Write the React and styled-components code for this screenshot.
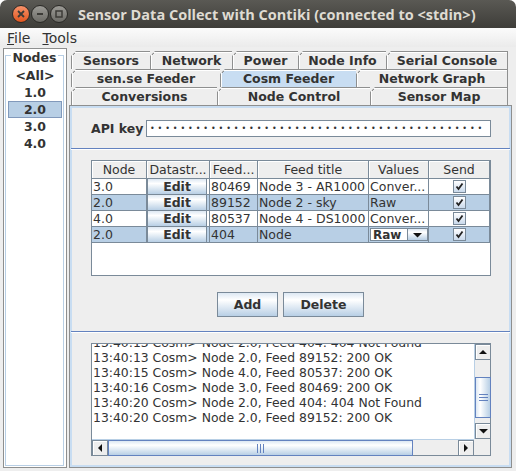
import React from 'react'
import styled, { createGlobalStyle } from 'styled-components'

const GlobalStyle = createGlobalStyle`
  html, body {
    margin: 0;
    padding: 0;
    background: #ffffff;
  }
  body {
    font-family: "DejaVu Sans", sans-serif;
    font-size: 12.5px;
    color: #333333;
  }
`

const Window = styled.div`
  width: 516px;
  height: 471px;
  display: flex;
  flex-direction: column;
  background: #eeeeee;
  border-radius: 7px 7px 0 0;
  overflow: hidden;
`

const TitleBar = styled.div`
  height: 28px;
  flex: none;
  display: flex;
  align-items: center;
  padding-left: 12px;
  background: linear-gradient(#5a5954, #3e3d39);
`

const WinButton = styled.span`
  width: 16px;
  height: 16px;
  border-radius: 50%;
  margin-right: 1px;
  display: flex;
  align-items: center;
  justify-content: center;
  border: 1px solid #2b2a27;
  background: ${(p) => (p.$close
    ? 'linear-gradient(#f7926a, #e2561f)'
    : 'linear-gradient(#9c9b96, #6c6b66)')};
`

const Title = styled.div`
  margin-left: 9px;
  color: #dfdbd2;
  font-family: "Open Sans", sans-serif;
  font-weight: 700;
  font-size: 14.5px;
  white-space: nowrap;
`

const MenuBar = styled.div`
  height: 19px;
  flex: none;
  display: flex;
  align-items: center;
  padding-left: 1px;
  background: linear-gradient(#fbfbfb, #ebebeb);
`

const MenuItem = styled.div`
  padding: 0 6px;
  font-size: 14px;
  color: #333333;
`

const Main = styled.div`
  flex: 1;
  display: flex;
  padding: 1px 4px 3px 3px;
  min-height: 0;
`

const LeftPanel = styled.div`
  width: 64px;
  box-sizing: border-box;
  border: 1px solid #8e8f8f;
  background: #ffffff;
  padding: 6px 2px 1px 1px;
  display: flex;
`

const TitledBox = styled.div`
  flex: 1;
  border: 1px solid #b8cfe5;
  display: flex;
  flex-direction: column;
  align-items: stretch;
`

const BoxTitle = styled.div`
  align-self: center;
  margin-top: -5px;
  padding: 0 2px;
  background: #ffffff;
  font-weight: bold;
  line-height: 14px;
`

const NodeList = styled.div`
  padding: 2px 1px 0 2px;
  display: flex;
  flex-direction: column;
`

const NodeItem = styled.div`
  height: 17px;
  box-sizing: border-box;
  display: flex;
  align-items: center;
  justify-content: center;
  font-weight: bold;
  background: ${(p) => (p.$sel ? '#b8cfe5' : 'transparent')};
  border: 1px solid ${(p) => (p.$sel ? '#8199bb' : 'transparent')};
`

const RightPanel = styled.div`
  flex: 1;
  margin-left: 2px;
  display: flex;
  flex-direction: column;
`

const TabArea = styled.div`
  flex: none;
  padding: 3px 4px 0 2px;
`

const TabRow = styled.div`
  display: flex;
  height: 18px;
`

const Tab = styled.div`
  box-sizing: border-box;
  width: ${(p) => p.$w}px;
  height: 18px;
  display: flex;
  align-items: center;
  justify-content: center;
  font-weight: bold;
  color: #333333;
  white-space: nowrap;
  border-top: 1px solid #8e8f8f;
  border-left: 1px solid #8e8f8f;
  border-right: ${(p) => (p.$last ? '1px solid #8e8f8f' : 'none')};
  box-shadow: inset 1px 1px 0 #ffffff;
  background:
    linear-gradient(135deg, transparent 3.3px, #8e8f8f 3.3px, #8e8f8f 4.5px, transparent 4.5px) top left / 7px 7px no-repeat border-box,
    ${(p) => (p.$sel ? '#c8ddf2' : '#eeeeee')};
  clip-path: polygon(5px 0, 100% 0, 100% 100%, 0 100%, 0 5px);
`

const Content = styled.div`
  flex: 1;
  min-height: 0;
  border: 1px solid #8e8f8f;
  box-shadow: inset 0 0 0 2px #c8ddf2;
  display: flex;
  flex-direction: column;
  padding: 2px;
  & > * {
    flex: none;
  }
`

const ApiRow = styled.div`
  display: flex;
  align-items: center;
  padding: 12px 18px 0 19px;
`

const Label = styled.div`
  font-weight: bold;
  width: 55px;
`

const TextField = styled.div`
  flex: 1;
  height: 17px;
  box-sizing: border-box;
  border: 1px solid #7a8a99;
  background: #ffffff;
  overflow: hidden;
  white-space: nowrap;
  display: flex;
  align-items: center;
  padding-left: 3px;
  font-size: 8px;
  letter-spacing: 2.9px;
  color: #333333;
`

const Separator = styled.div`
  height: 1px;
  margin: 0 -1px;
  background: #6382bf;
  border-bottom: 1px solid #ffffff;
  margin-top: ${(p) => p.$top}px;
`

const ScrollPane = styled.div`
  margin: ${(p) => p.$top}px 18px 0 19px;
  height: ${(p) => p.$h}px;
  box-sizing: border-box;
  border: 1px solid #7a8a99;
  background: #ffffff;
`

const TableGrid = styled.div`
  display: grid;
  grid-template-columns: 55px 63px 48px 111px 60px 61px;
`

const HeadCell = styled.div`
  height: 18px;
  box-sizing: border-box;
  border-right: 1px solid #7a8a99;
  border-bottom: 1px solid #7a8a99;
  background: #eeeeee;
  box-shadow: inset 1px 1px 0 #ffffff;
  display: flex;
  align-items: center;
  justify-content: center;
  white-space: nowrap;
  overflow: hidden;
`

const Cell = styled.div`
  height: 16px;
  box-sizing: border-box;
  border-right: 1px solid #7a8a99;
  border-bottom: 1px solid #7a8a99;
  background: ${(p) => (p.$sel ? '#b8cfe5' : '#ffffff')};
  display: flex;
  align-items: center;
  justify-content: ${(p) => (p.$center ? 'center' : 'flex-start')};
  padding: ${(p) => (p.$pad ? '0 0 0 1px' : '0')};
  white-space: nowrap;
  overflow: hidden;
`

const EditButton = styled.div`
  width: 60px;
  height: 15px;
  box-sizing: border-box;
  border-left: 1px solid #7a8a99;
  border-right: 1px solid #7a8a99;
  background: linear-gradient(#dde8f3 0%, #ffffff 30%, #b8cfe5 100%);
  display: flex;
  align-items: center;
  justify-content: center;
  font-weight: bold;
`

const Combo = styled.div`
  width: 58px;
  height: 13px;
  margin-left: 1px;
  box-sizing: border-box;
  border: 1px solid #7a8a99;
  display: flex;
`

const ComboText = styled.div`
  flex: 1;
  background: #ffffff;
  font-weight: bold;
  font-size: 12px;
  display: flex;
  align-items: center;
  padding-left: 2px;
`

const ComboArrow = styled.div`
  width: 19px;
  border-left: 1px solid #7a8a99;
  background: linear-gradient(#dde8f3 0%, #ffffff 30%, #b8cfe5 100%);
  display: flex;
  align-items: center;
  justify-content: center;
`

const CheckBox = styled.div`
  width: 11px;
  height: 11px;
  border: 1px solid #7a8a99;
  background: linear-gradient(#ffffff, #c9d9ec);
  display: flex;
  align-items: center;
  justify-content: center;
`

const ButtonRow = styled.div`
  display: flex;
  justify-content: center;
  gap: 5px;
  margin-top: 16px;
`

const Button = styled.button`
  width: ${(p) => p.$w}px;
  height: 25px;
  border: 1px solid #7a8a99;
  border-radius: 0;
  background: linear-gradient(#dde8f3 0%, #ffffff 30%, #b8cfe5 100%);
  font-family: "DejaVu Sans", sans-serif;
  font-weight: bold;
  font-size: 12.5px;
  color: #333333;
  padding: 0;
`

const LogGrid = styled.div`
  display: grid;
  grid-template-columns: 382px 16px;
  grid-template-rows: 95px 16px;
  height: 100%;
`

const LogView = styled.div`
  overflow: hidden;
  background: #ffffff;
`

const LogText = styled.div`
  margin-top: -9px;
  padding-left: 1px;
  line-height: 15px;
  white-space: nowrap;
  font-size: 12.4px;
`

const VBar = styled.div`
  display: flex;
  flex-direction: column;
  background: #eeeeee;
  border-left: 1px solid #b8cfe5;
`

const HBar = styled.div`
  display: flex;
  background: #eeeeee;
  border-top: 1px solid #b8cfe5;
`

const ArrowBtn = styled.div`
  width: 16px;
  height: 16px;
  flex: none;
  box-sizing: border-box;
  border: 1px solid #7a8a99;
  background: #eeeeee;
  box-shadow: inset 1px 1px 0 #ffffff;
  display: flex;
  align-items: center;
  justify-content: center;
`

const Thumb = styled.div`
  box-sizing: border-box;
  border: 1px solid #6382bf;
  display: flex;
  align-items: center;
  justify-content: center;
  flex: none;
  width: ${(p) => (p.$vertical ? '16px' : `${p.$len}px`)};
  height: ${(p) => (p.$vertical ? `${p.$len}px` : '16px')};
  background: linear-gradient(${(p) => (p.$vertical ? 'to right' : 'to bottom')}, #dde8f3 0%, #ffffff 30%, #b8cfe5 100%);
`

const Track = styled.div`
  flex: ${(p) => (p.$grow ? 1 : 'none')};
  width: ${(p) => (p.$size ? `${p.$size}px` : 'auto')};
  height: ${(p) => (p.$size ? `${p.$size}px` : 'auto')};
`

const Corner = styled.div`
  background: #eeeeee;
`

const CheckMark = () => (
  <svg width="9" height="9" viewBox="0 0 9 9">
    <path d="M1.5 4.5 L3.5 7 L7.5 1.5" stroke="#222" strokeWidth="1.8" fill="none" />
  </svg>
)

const Tri = ({ dir }) => {
  const pts = {
    up: '0,5 4,1 8,5',
    down: '0,1 4.5,5.5 9,1',
    left: '5,0 1,4 5,8',
    right: '1,0 5,4 1,8',
  }[dir]
  const vert = dir === 'up' || dir === 'down'
  return (
    <svg width={vert ? 9 : 6} height={vert ? 6 : 8} viewBox={vert ? '0 0 9 6' : '0 0 6 8'}>
      <polygon points={pts} fill="#111" />
    </svg>
  )
}

const Grip = ({ vertical }) => (
  <svg width={vertical ? 9 : 7} height={vertical ? 7 : 9}>
    {[0, 3, 6].map((o) =>
      vertical
        ? <line key={o} x1="0" x2="9" y1={o + 0.5} y2={o + 0.5} stroke="#6382bf" />
        : <line key={o} y1="0" y2="9" x1={o + 0.5} x2={o + 0.5} stroke="#6382bf" />
    )}
  </svg>
)

const tabRows = [
  [['Sensors', 79], ['Network', 82], ['Power', 66], ['Node Info', 88], ['Serial Console', 122]],
  [['sen.se Feeder', 149], ['Cosm Feeder', 136, true], ['Network Graph', 152]],
  [['Conversions', 146], ['Node Control', 153], ['Sensor Map', 138]],
]

const feeds = [
  { node: '3.0', feed: '80469', title: 'Node 3 - AR1000', values: 'Conver...' },
  { node: '2.0', feed: '89152', title: 'Node 2 - sky', values: 'Raw', sel: true },
  { node: '4.0', feed: '80537', title: 'Node 4 - DS1000', values: 'Conver...' },
  { node: '2.0', feed: '404', title: 'Node', combo: true, sel: true },
]

const logLines = [
  '13:40:13 Cosm> Node 2.0, Feed 404: 404 Not Found',
  '13:40:13 Cosm> Node 2.0, Feed 89152: 200 OK',
  '13:40:15 Cosm> Node 4.0, Feed 80537: 200 OK',
  '13:40:16 Cosm> Node 3.0, Feed 80469: 200 OK',
  '13:40:20 Cosm> Node 2.0, Feed 404: 404 Not Found',
  '13:40:20 Cosm> Node 2.0, Feed 89152: 200 OK',
]

function App() {
  return (
    <Window>
      <GlobalStyle />
      <TitleBar>
        <WinButton $close>
          <svg width="8" height="8"><path d="M1 1 L7 7 M7 1 L1 7" stroke="#3c3b37" strokeWidth="1.8" /></svg>
        </WinButton>
        <WinButton>
          <svg width="8" height="8"><path d="M1 4 L7 4" stroke="#3c3b37" strokeWidth="1.8" /></svg>
        </WinButton>
        <WinButton>
          <svg width="8" height="8"><rect x="1" y="1" width="6" height="6" stroke="#3c3b37" strokeWidth="1.5" fill="none" /></svg>
        </WinButton>
        <Title>Sensor Data Collect with Contiki (connected to &lt;stdin&gt;)</Title>
      </TitleBar>

      <MenuBar>
        <MenuItem><u>F</u>ile</MenuItem>
        <MenuItem><u>T</u>ools</MenuItem>
      </MenuBar>

      <Main>
        <LeftPanel>
          <TitledBox>
            <BoxTitle>Nodes</BoxTitle>
            <NodeList>
              {['<All>', '1.0', '2.0', '3.0', '4.0'].map((n) => (
                <NodeItem key={n} $sel={n === '2.0'}>{n}</NodeItem>
              ))}
            </NodeList>
          </TitledBox>
        </LeftPanel>

        <RightPanel>
          <TabArea>
            {tabRows.map((row, i) => (
              <TabRow key={i}>
                {row.map(([name, w, sel], j) => (
                  <Tab key={name} $w={w} $sel={sel} $last={j === row.length - 1}>{name}</Tab>
                ))}
              </TabRow>
            ))}
          </TabArea>

          <Content>
            <ApiRow>
              <Label>API key</Label>
              <TextField>{'•'.repeat(44)}</TextField>
            </ApiRow>

            <Separator $top={11} />

            <ScrollPane $top={10} $h={116}>
              <TableGrid>
                <HeadCell>Node</HeadCell>
                <HeadCell>Datastr...</HeadCell>
                <HeadCell>Feed...</HeadCell>
                <HeadCell>Feed title</HeadCell>
                <HeadCell>Values</HeadCell>
                <HeadCell>Send</HeadCell>
                {feeds.map((f, i) => (
                  <React.Fragment key={i}>
                    <Cell $sel={f.sel} $pad>{f.node}</Cell>
                    <Cell $sel={f.sel}><EditButton>Edit</EditButton></Cell>
                    <Cell $sel={f.sel} $pad>{f.feed}</Cell>
                    <Cell $sel={f.sel} $pad>{f.title}</Cell>
                    <Cell $sel={f.sel} $pad={!f.combo}>
                      {f.combo ? (
                        <Combo>
                          <ComboText>Raw</ComboText>
                          <ComboArrow><Tri dir="down" /></ComboArrow>
                        </Combo>
                      ) : f.values}
                    </Cell>
                    <Cell $sel={f.sel} $center><CheckBox><CheckMark /></CheckBox></Cell>
                  </React.Fragment>
                ))}
              </TableGrid>
            </ScrollPane>

            <ButtonRow>
              <Button $w={61}>Add</Button>
              <Button $w={81}>Delete</Button>
            </ButtonRow>

            <Separator $top={14} />

            <ScrollPane $top={10} $h={113}>
              <LogGrid>
                <LogView>
                  <LogText>
                    {logLines.map((l, i) => <div key={i}>{l}</div>)}
                  </LogText>
                </LogView>
                <VBar>
                  <ArrowBtn><Tri dir="up" /></ArrowBtn>
                  <Track $size={17} />
                  <Thumb $vertical $len={41}><Grip vertical /></Thumb>
                  <Track $grow />
                  <ArrowBtn><Tri dir="down" /></ArrowBtn>
                </VBar>
                <HBar>
                  <ArrowBtn><Tri dir="left" /></ArrowBtn>
                  <Thumb $len={305}><Grip /></Thumb>
                  <Track $grow />
                  <ArrowBtn><Tri dir="right" /></ArrowBtn>
                </HBar>
                <Corner />
              </LogGrid>
            </ScrollPane>
          </Content>
        </RightPanel>
      </Main>
    </Window>
  )
}

export default App
